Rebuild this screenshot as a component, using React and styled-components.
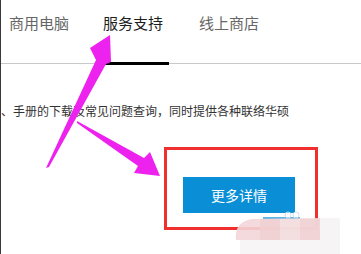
import React from "react";
import styled, { createGlobalStyle } from "styled-components";

const Global = createGlobalStyle`
  html, body { margin: 0; padding: 0; background: #fff; }
  body { font-family: "Noto Sans CJK SC", "Noto Sans", sans-serif; }
`;

const Page = styled.div`
  position: relative;
  box-sizing: border-box;
  width: 361px;
  height: 254px;
  border-left: 1px solid #3a3a3a;
  overflow: hidden;
  background: #fff;
`;

const TabBar = styled.nav`
  box-sizing: border-box;
  height: 64px;
  display: flex;
  align-items: flex-start;
  padding-left: 8px;
  border-bottom: 1px solid #c8c8c8;
`;

const Tab = styled.div`
  box-sizing: border-box;
  height: ${(p) => (p.$active ? "65px" : "63px")};
  padding-top: 15px;
  padding-right: ${(p) => (p.$active ? "6px" : "0")};
  margin-right: ${(p) => (p.$active ? "30px" : "34px")};
  border-bottom: ${(p) => (p.$active ? "3px solid #000" : "none")};
  font-size: 15px;
  line-height: 15px;
  color: ${(p) => (p.$active ? "#1e1e1e" : "#666")};
  white-space: nowrap;
`;

const Content = styled.section`
  display: flex;
  flex-direction: column;
  padding-top: 41px;
`;

const Intro = styled.p`
  margin: 0;
  font-size: 12px;
  line-height: 12px;
  color: #333;
  white-space: nowrap;
`;

const Highlight = styled.div`
  box-sizing: border-box;
  width: 154px;
  height: 83px;
  margin: 30px 0 0 163px;
  padding: 27px 0 0 16px;
  border: 3px solid #f02f2f;
`;

const MoreButton = styled.button`
  display: flex;
  align-items: center;
  justify-content: center;
  width: 112px;
  height: 36px;
  padding: 0;
  border: none;
  background: #0a8fd6;
  color: #fff;
  font-family: "Noto Sans CJK SC", "Noto Sans", sans-serif;
  font-size: 14px;
  line-height: 14px;
`;

const Overlay = styled.svg`
  position: absolute;
  top: 0;
  left: -1px;
  width: 361px;
  height: 254px;
  pointer-events: none;
`;

export default function App() {
  return (
    <>
      <Global />
      <Page>
        <TabBar>
          <Tab>商用电脑</Tab>
          <Tab $active>服务支持</Tab>
          <Tab>线上商店</Tab>
        </TabBar>
        <Content>
          <Intro>、手册的下载及常见问题查询，同时提供各种联络华硕</Intro>
          <Highlight>
            <MoreButton>更多详情</MoreButton>
          </Highlight>
        </Content>
        <Overlay viewBox="0 0 361 254">
          {/* watermark remnants */}
          <rect x="263" y="217" width="37" height="2" fill="#5db4e8" />
          <circle cx="288" cy="215" r="3" fill="none" stroke="#cfe0ec" strokeWidth="1" />
          <circle cx="296" cy="215" r="3" fill="none" stroke="#cfe0ec" strokeWidth="1" />
          <path d="M236 240 Q234 222 252 219 L320 218 L320 240 Z" fill="#f3d6d8" opacity="0.9" />
          <rect x="260" y="219" width="20" height="21" fill="#f0cfd2" opacity="0.8" />
          <rect x="300" y="219" width="20" height="21" fill="#f0d2d4" opacity="0.8" />
          <rect x="280" y="219" width="20" height="21" fill="#f2e0e0" opacity="0.8" />
          <rect x="320" y="218" width="20" height="36" fill="#f6f4f4" />
          <rect x="240" y="240" width="80" height="14" fill="#f7f5f5" />
          {/* arrows */}
          <polygon
            points="46,168 49,167 106,64 111,62 110,35 90,48 96,60"
            fill="#ee22ee"
          />
          <polygon
            points="77,121 144,158 150,152 160,176 134,173 138,166 77,123"
            fill="#ee22ee"
          />
        </Overlay>
      </Page>
    </>
  );
}
